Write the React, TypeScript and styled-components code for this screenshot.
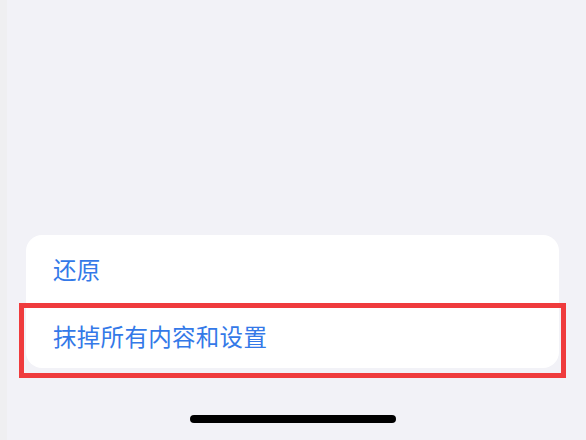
import React from 'react';
import styled, { createGlobalStyle } from 'styled-components';

const GlobalStyle = createGlobalStyle`
  html, body {
    margin: 0;
    padding: 0;
    background-color: #f2f2f7;
  }
  body {
    font-family: "Noto Sans CJK SC", "Noto Sans", sans-serif;
  }
`;

const Screen = styled.div`
  display: flex;
  flex-direction: column;
  justify-content: flex-end;
  align-items: stretch;
  width: 586px;
  height: 440px;
  box-sizing: border-box;
  background-color: #f2f2f7;
  border-left: 7px solid #efeff1;
  overflow: hidden;
`;

const Card = styled.div`
  display: flex;
  flex-direction: column;
  background-color: #ffffff;
  margin: 0 27px 0 19px;
  border-radius: 16px;
`;

const Row = styled.div<{ $height: number; $highlight?: boolean }>`
  position: relative;
  display: flex;
  align-items: center;
  height: ${(p) => p.$height}px;
  padding: 0 0 0 27px;
  font-size: 23.5px;
  letter-spacing: 0.3px;
  color: #3479e8;
`;

const Highlight = styled.div`
  position: absolute;
  left: -7px;
  right: -7px;
  top: 0;
  bottom: -10px;
  border: 5px solid #ef3b3d;
  pointer-events: none;
`;

const HomeArea = styled.div`
  display: flex;
  justify-content: center;
  padding: 47px 0 17px 0;
`;

const HomeBar = styled.div`
  width: 206px;
  height: 8px;
  border-radius: 4px;
  background-color: #000000;
  margin-left: -8px;
`;

const App = () => {
  return (
    <>
      <GlobalStyle />
      <Screen>
        <Card>
          <Row $height={68}>还原</Row>
          <Row $height={65}>
            抹掉所有内容和设置
            <Highlight />
          </Row>
        </Card>
        <HomeArea>
          <HomeBar />
        </HomeArea>
      </Screen>
    </>
  );
};

export default App;
